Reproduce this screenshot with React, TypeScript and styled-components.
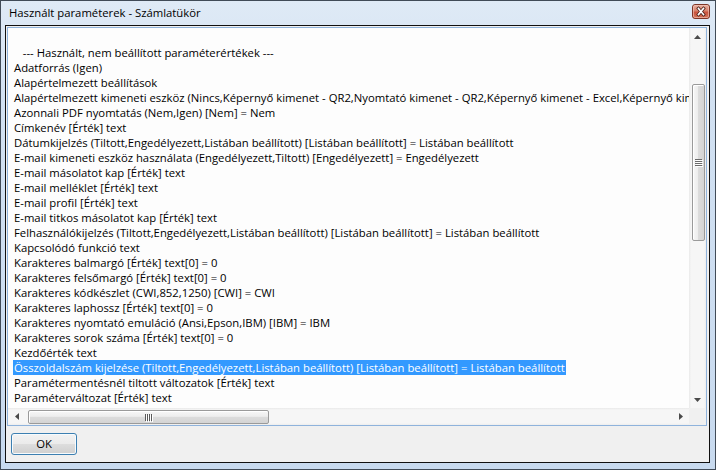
import React from "react";
import styled, { createGlobalStyle } from "styled-components";

const FONT = `"Segoe UI", "Open Sans", "Noto Sans", sans-serif`;

const GlobalStyle = createGlobalStyle`
  html, body { margin: 0; padding: 0; overflow: hidden; background: #ffffff; }
  #root { width: 716px; height: 470px; }
  * { box-sizing: border-box; }
`;

const Window = styled.div`
  width: 716px;
  height: 470px;
  border: 1px solid #414b57;
  background: linear-gradient(to bottom, #dfeaf6 0%, #d2e1f2 20%, #c8daef 100%);
  display: flex;
  flex-direction: column;
  font-family: ${FONT};
  font-size: 11.3px;
  color: #000;
`;

const TitleBar = styled.div`
  height: 24px;
  flex: none;
  display: flex;
  align-items: flex-start;
  justify-content: space-between;
  padding: 0 5px 0 8px;
`;

const TitleText = styled.div`
  line-height: 16px;
  margin-top: 4px;
  white-space: nowrap;
`;

const CloseButton = styled.div`
  width: 18px;
  height: 15px;
  margin-top: 3px;
  display: flex;
`;

const Client = styled.div`
  flex: 1;
  margin: 0 5px 6px 4px;
  border: 1px solid #101010;
  background: #f0f0f0;
  display: flex;
  flex-direction: column;
  min-height: 0;
`;

const TextBox = styled.div`
  margin: 1px 2px 0 1px;
  height: 399px;
  flex: none;
  border: 1px solid #8fb3dc;
  background: #fdfdfd;
  display: grid;
  grid-template-columns: 1fr 17px;
  grid-template-rows: 1fr 17px;
  min-width: 0;
`;

const Content = styled.div`
  overflow: hidden;
  padding: 2px 0 0 6px;
  white-space: pre;
  line-height: 15px;
`;

const Line = styled.div`
  height: 15px;
`;

const Selected = styled.span`
  background: #3399ff;
  color: #ffffff;
  margin-left: -1px;
  padding: 0 1px;
`;

const VScroll = styled.div`
  display: flex;
  flex-direction: column;
  background: linear-gradient(to right, #e9e9e9 0, #f6f6f6 2px, #f6f6f6 calc(100% - 2px), #ededed 100%);
`;

const HScroll = styled.div`
  display: flex;
  flex-direction: row;
  align-items: stretch;
  background: linear-gradient(to bottom, #e9e9e9 0, #f6f6f6 2px, #f6f6f6 calc(100% - 2px), #ededed 100%);
`;

const ArrowButton = styled.div`
  width: 17px;
  height: 17px;
  flex: none;
  display: flex;
  align-items: center;
  justify-content: center;
`;

const Spacer = styled.div`
  flex: 1;
`;

const VThumb = styled.div<{ $offset: number; $length: number }>`
  margin: ${(p) => p.$offset}px 1px 0 3px;
  height: ${(p) => p.$length}px;
  flex: none;
  border: 1px solid #9a9a9a;
  border-radius: 2px;
  background: linear-gradient(to right, #f7f7f7 0%, #ededed 45%, #dcdcdc 50%, #d4d4d4 100%);
  box-shadow: inset 1px 1px 0 #ffffff;
  display: flex;
  align-items: center;
  justify-content: center;
`;

const HThumb = styled.div<{ $offset: number; $length: number }>`
  margin: 2px 0 1px ${(p) => p.$offset}px;
  width: ${(p) => p.$length}px;
  flex: none;
  border: 1px solid #9a9a9a;
  border-radius: 2px;
  background: linear-gradient(to bottom, #f7f7f7 0%, #ededed 45%, #dcdcdc 50%, #d4d4d4 100%);
  box-shadow: inset 1px 1px 0 #ffffff;
  display: flex;
  align-items: center;
  justify-content: center;
`;

const GripH = styled.div`
  display: flex;
  gap: 1px;
`;

const GripBarV = styled.div`
  width: 1px;
  height: 7px;
  background: #5a5a5a;
  box-shadow: 1px 1px 0 #ffffff;
`;

const GripV = styled.div`
  display: flex;
  flex-direction: column;
  gap: 1px;
`;

const GripBarH = styled.div`
  width: 7px;
  height: 1px;
  background: #6a6a6a;
  box-shadow: 1px 1px 0 #ffffff;
`;

const Corner = styled.div`
  background: #f0f0f0;
`;

const ButtonRow = styled.div`
  flex: 1;
  display: flex;
  align-items: flex-start;
  padding: 7px 0 0 5px;
`;

const OkButton = styled.button`
  width: 66px;
  height: 22px;
  border: 1px solid #3c7fb1;
  border-radius: 3px;
  background: linear-gradient(to bottom, #f2f2f2 0%, #ebebeb 48%, #dddddd 52%, #cfcfcf 100%);
  box-shadow: inset 0 0 0 1px #f6fbfe;
  font-family: ${FONT};
  font-size: 11.3px;
  color: #000;
  padding: 0;
  line-height: 18px;
`;

const Arrow = ({ dir }: { dir: "up" | "down" | "left" | "right" }) => {
  const pts: Record<string, string> = {
    up: "0,4 3.5,0 7,4",
    down: "0,0 7,0 3.5,4",
    left: "4,0 4,7 0,3.5",
    right: "0,0 0,7 4,3.5",
  };
  const vertical = dir === "up" || dir === "down";
  return (
    <svg width={vertical ? 7 : 4} height={vertical ? 4 : 7} viewBox={vertical ? "0 0 7 4" : "0 0 4 7"}>
      <polygon points={pts[dir]} fill="#4a4a4a" />
    </svg>
  );
};

const CloseGlyph = () => (
  <svg width="18" height="15" viewBox="0 0 18 15">
    <defs>
      <linearGradient id="cbg" x1="0" y1="0" x2="0" y2="1">
        <stop offset="0" stopColor="#eab2a3" />
        <stop offset="0.45" stopColor="#d8826c" />
        <stop offset="0.55" stopColor="#c9533d" />
        <stop offset="1" stopColor="#d4765a" />
      </linearGradient>
    </defs>
    <rect x="0.5" y="0.5" width="17" height="14" rx="2.5" fill="url(#cbg)" stroke="#7e3526" />
    <rect x="1.5" y="1.5" width="15" height="12" rx="1.5" fill="none" stroke="#f3c8bc" strokeOpacity="0.6" />
    <path d="M6.5 4.5 L11.5 10.5 M11.5 4.5 L6.5 10.5" stroke="#4a1f18" strokeWidth="3.2" strokeLinecap="square" />
    <path d="M6.5 4.5 L11.5 10.5 M11.5 4.5 L6.5 10.5" stroke="#ffffff" strokeWidth="1.6" strokeLinecap="square" />
  </svg>
);

const lines: string[] = [
  "",
  "   --- Használt, nem beállított paraméterértékek ---",
  "Adatforrás (Igen)",
  "Alapértelmezett beállítások",
  "Alapértelmezett kimeneti eszköz (Nincs,Képernyő kimenet - QR2,Nyomtató kimenet - QR2,Képernyő kimenet - Excel,Képernyő kimenet - PDF) [Nincs] = Nincs",
  "Azonnali PDF nyomtatás (Nem,Igen) [Nem] = Nem",
  "Címkenév [Érték] text",
  "Dátumkijelzés (Tiltott,Engedélyezett,Listában beállított) [Listában beállított] = Listában beállított",
  "E-mail kimeneti eszköz használata (Engedélyezett,Tiltott) [Engedélyezett] = Engedélyezett",
  "E-mail másolatot kap [Érték] text",
  "E-mail melléklet [Érték] text",
  "E-mail profil [Érték] text",
  "E-mail titkos másolatot kap [Érték] text",
  "Felhasználókijelzés (Tiltott,Engedélyezett,Listában beállított) [Listában beállított] = Listában beállított",
  "Kapcsolódó funkció text",
  "Karakteres balmargó [Érték] text[0] = 0",
  "Karakteres felsőmargó [Érték] text[0] = 0",
  "Karakteres kódkészlet (CWI,852,1250) [CWI] = CWI",
  "Karakteres laphossz [Érték] text[0] = 0",
  "Karakteres nyomtató emuláció (Ansi,Epson,IBM) [IBM] = IBM",
  "Karakteres sorok száma [Érték] text[0] = 0",
  "Kezdőérték text",
  "Összoldalszám kijelzése (Tiltott,Engedélyezett,Listában beállított) [Listában beállított] = Listában beállított",
  "Paramétermentésnél tiltott változatok [Érték] text",
  "Paraméterváltozat [Érték] text",
];

const SELECTED_INDEX = 22;

export default function App() {
  return (
    <>
      <GlobalStyle />
      <Window>
        <TitleBar>
          <TitleText>Használt paraméterek - Számlatükör</TitleText>
          <CloseButton>
            <CloseGlyph />
          </CloseButton>
        </TitleBar>
        <Client>
          <TextBox>
            <Content>
              {lines.map((l, i) => (
                <Line key={i}>{i === SELECTED_INDEX ? <Selected>{l}</Selected> : l}</Line>
              ))}
            </Content>
            <VScroll>
              <ArrowButton>
                <Arrow dir="up" />
              </ArrowButton>
              <VThumb $offset={39} $length={157}>
                <GripV>
                  <GripBarH />
                  <GripBarH />
                  <GripBarH />
                  <GripBarH />
                </GripV>
              </VThumb>
              <Spacer />
              <ArrowButton>
                <Arrow dir="down" />
              </ArrowButton>
            </VScroll>
            <HScroll>
              <ArrowButton>
                <Arrow dir="left" />
              </ArrowButton>
              <HThumb $offset={3} $length={241}>
                <GripH>
                  <GripBarV />
                  <GripBarV />
                  <GripBarV />
                  <GripBarV />
                </GripH>
              </HThumb>
              <Spacer />
              <ArrowButton>
                <Arrow dir="right" />
              </ArrowButton>
            </HScroll>
            <Corner />
          </TextBox>
          <ButtonRow>
            <OkButton>OK</OkButton>
          </ButtonRow>
        </Client>
      </Window>
    </>
  );
}
